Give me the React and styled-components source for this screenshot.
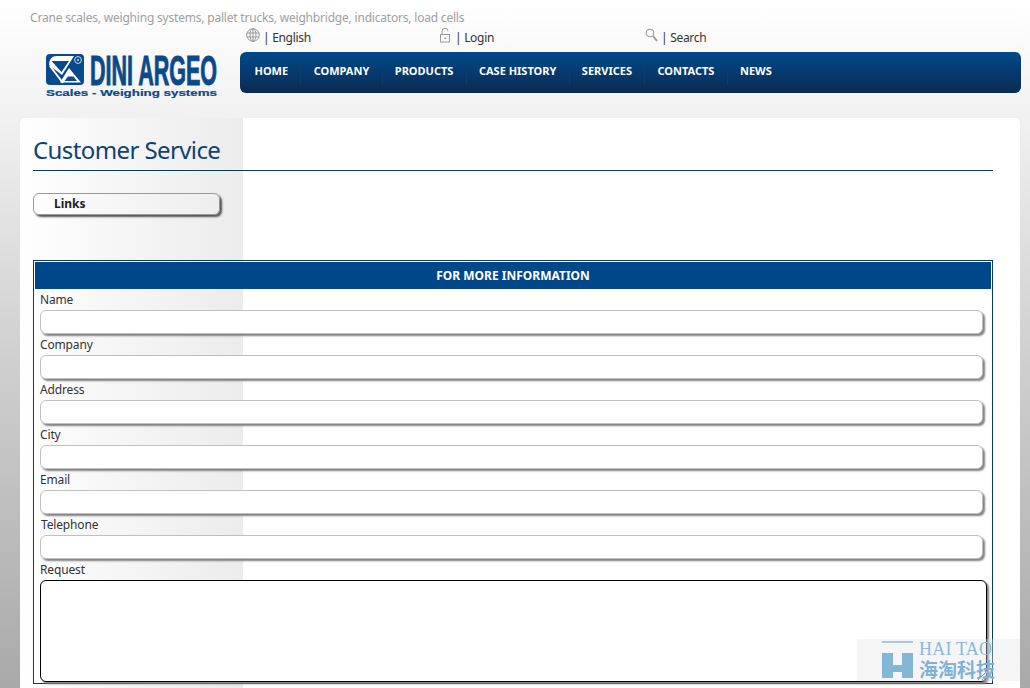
import React from "react";
import styled, { createGlobalStyle } from "styled-components";

const Global = createGlobalStyle`
  html, body { margin: 0; padding: 0; height: 688px; overflow: hidden; }
  body {
    background: linear-gradient(180deg, #ffffff 0, #f1f1f1 118px, #d4d4d4 320px, #a9a9a9 688px);
    font-family: "Noto Sans", "DejaVu Sans", sans-serif;
    color: #333;
  }
  * { box-sizing: border-box; }
`;

const Page = styled.div`
  position: relative;
  width: 1030px;
  height: 688px;
  overflow: hidden;
`;

const Tagline = styled.div`
  height: 27px;
  padding: 8px 0 0 30px;
  font-size: 12px;
  line-height: 20px;
  letter-spacing: -0.2px;
  color: #a0a0a0;
`;

const HeaderBody = styled.header`
  display: flex;
  height: 91px;
`;

const LogoSlot = styled.div`
  width: 240px;
  padding: 26px 0 0 45px;
`;

const HeaderRight = styled.div`
  width: 781px;
`;

const UtilRow = styled.div`
  display: flex;
  height: 25px;
  padding-left: 6px;
`;

const UtilItem = styled.a`
  display: flex;
  align-items: flex-start;
  width: ${(p) => p.$w}px;
  font-size: 12px;
  line-height: 22px;
  letter-spacing: -0.3px;
  color: #333;
  svg { margin-top: 1px; margin-right: 3px; flex: none; }
`;

const Nav = styled.nav`
  display: flex;
  align-items: center;
  height: 41px;
  border-radius: 6px;
  padding-left: 2.25px;
  background: linear-gradient(180deg, #00498c 0, #0b2b50 100%);
`;

const NavItem = styled.a`
  padding: 0 12.25px;
  height: 24px;
  line-height: 20px;
  font-size: 11px;
  font-weight: 700;
  color: #fff;
  white-space: nowrap;
  border-right: 1px solid ${(p) => (p.$last ? "transparent" : "#0d3d70")};
`;

const Card = styled.main`
  width: 1000px;
  height: 600px;
  margin-left: 20px;
  border-radius: 5px 5px 0 0;
  padding: 0 27px 0 13px;
  background:
    linear-gradient(90deg, #ffffff 0, #f8f8f8 70px, #ececec 223px, transparent 223px) no-repeat,
    #fff;
`;

const Title = styled.h1`
  margin: 0;
  height: 53px;
  padding-top: 14px;
  font-size: 24px;
  line-height: 36px;
  letter-spacing: -0.6px;
  font-weight: 400;
  color: #0f4273;
  border-bottom: 1px solid #0d3a5f;
`;

const LinkButton = styled.a`
  display: block;
  width: 187px;
  height: 22px;
  margin-top: 22px;
  padding-left: 20px;
  font-size: 12px;
  line-height: 19px;
  font-weight: 700;
  color: #222;
  background: transparent;
  border: 1px solid #999;
  border-radius: 6px;
  box-shadow: 2px 2px 2px #555;
`;

const FormBox = styled.form`
  width: 960px;
  margin-top: 45px;
  padding: 1px;
  border: 1px solid #0c3c5c;
`;

const FormHead = styled.div`
  height: 27px;
  margin-bottom: 1px;
  text-align: center;
  font-size: 12px;
  line-height: 27px;
  font-weight: 700;
  color: #fff;
  background: #00478a;
`;

const Label = styled.label`
  display: block;
  height: 20px;
  padding-left: ${(p) => p.$indent || 5}px;
  font-size: 12px;
  line-height: 20px;
  letter-spacing: -0.15px;
  color: #333;
`;

const Field = styled.input`
  display: block;
  width: 943px;
  height: 24px;
  margin: 0 0 1px 5px;
  border: 1px solid #c0c0c0;
  border-radius: 6px;
  background: #fff;
  box-shadow: 2px 2px 2px #808080;
  outline: none;
`;

const Area = styled.textarea`
  display: block;
  width: 947px;
  height: 102px;
  margin-left: 5px;
  border: 1px solid #000;
  border-radius: 6px;
  background: #fff;
  box-shadow: 2px 2px 2px #808080;
  outline: none;
`;

const Watermark = styled.aside`
  position: absolute;
  left: 857px;
  top: 639px;
  width: 163px;
  height: 42px;
  display: flex;
  gap: 6px;
  padding: 2px 0 0 25px;
  background: rgba(225, 225, 225, 0.35);
`;

const WmText = styled.div`
  display: flex;
  flex-direction: column;
  color: #7fb2d6;
`;

const WmLatin = styled.span`
  font-family: "Liberation Serif", serif;
  font-size: 18px;
  line-height: 17px;
  letter-spacing: 0.2px;
  white-space: nowrap;
  color: #8db9d8;
`;

const WmCjk = styled.span`
  font-family: "Noto Sans CJK SC", sans-serif;
  font-size: 19px;
  line-height: 22px;
  font-weight: 700;
  white-space: nowrap;
`;

const Logo = () => (
  <svg width="174" height="46" viewBox="0 0 174 46" style={{ display: "block" }}>
    <rect x="1" y="1" width="38" height="31" rx="4" fill="#0a4a8a" />
    <path d="M4 12 Q4 3 12 3 H29 L17 22 Z" fill="#fff" />
    <path d="M6.5 8 H24 L16.5 19 Z" fill="#0a4a8a" />
    <path d="M5 13 L18 30" stroke="#fff" strokeWidth="2" fill="none" />
    <path d="M24 15 L36 29.5 H15 Z" fill="#fff" />
    <path d="M19.5 28 L23 23.5 H28.5 L32 28 Z" fill="#0a4a8a" />
    <circle cx="33" cy="7" r="3.4" fill="#0a4a8a" stroke="#cfd9e4" strokeWidth="1" />
    <circle cx="33" cy="7" r="1" fill="#cfd9e4" />
    <text transform="translate(45 32) scale(1 2.15)" fontFamily="Liberation Sans" fontWeight="700" fontSize="20" fill="#0a4a8a" stroke="#0a4a8a" strokeWidth="0.5" textLength="127" lengthAdjust="spacingAndGlyphs">DINI ARGEO</text>
    <text transform="translate(1 43) scale(1 0.72)" fontFamily="Liberation Sans" fontWeight="700" fontSize="13" fill="#0a4a8a" stroke="#0a4a8a" strokeWidth="0.3" textLength="171" lengthAdjust="spacingAndGlyphs">Scales - Weighing systems</text>
  </svg>
);

const Globe = () => (
  <svg width="14" height="14" viewBox="0 0 14 14" fill="none" stroke="#999" strokeWidth="1">
    <circle cx="7" cy="7" r="6.3" />
    <ellipse cx="7" cy="7" rx="3" ry="6.3" />
    <path d="M7 .7V13.3M.8 5H13.2M.8 9H13.2" />
  </svg>
);

const Lock = () => (
  <svg width="13" height="15" viewBox="0 0 13 15" fill="none" stroke="#999" strokeWidth="1">
    <path d="M3 6.5V3.5a3 3 0 0 1 6-.4" />
    <rect x="1.5" y="6.5" width="9" height="7.5" />
    <rect x="5.5" y="9.5" width="1.4" height="1.6" fill="#888" stroke="none" />
  </svg>
);

const Search = () => (
  <svg width="13" height="15" viewBox="0 0 13 15" fill="none" stroke="#999">
    <circle cx="5" cy="5" r="3.8" strokeWidth="1.1" />
    <path d="M8 8L12 13" strokeWidth="2" />
  </svg>
);

const HMark = () => (
  <svg width="31" height="40" viewBox="0 0 31 40" style={{ flex: "none" }}>
    <rect x="0" y="0" width="31" height="2" fill="#a8cbe2" />
    <path d="M0 12H11V24H20V12H31V37H20V31H11V37H0Z" fill="#86b6d6" />
  </svg>
);

const navItems = ["HOME", "COMPANY", "PRODUCTS", "CASE HISTORY", "SERVICES", "CONTACTS", "NEWS"];
const fields = [["Name"], ["Company"], ["Address"], ["City"], ["Email"], ["Telephone", 6]];

export default function App() {
  return (
    <Page>
      <Global />
      <Tagline>Crane scales, weighing systems, pallet trucks, weighbridge, indicators, load cells</Tagline>
      <HeaderBody>
        <LogoSlot><Logo /></LogoSlot>
        <HeaderRight>
          <UtilRow>
            <UtilItem $w={193}><Globe />| English</UtilItem>
            <UtilItem $w={206}><Lock />| Login</UtilItem>
            <UtilItem $w={200}><Search />| Search</UtilItem>
          </UtilRow>
          <Nav>
            {navItems.map((n, i) => (
              <NavItem key={n} $last={i === navItems.length - 1}>{n}</NavItem>
            ))}
          </Nav>
        </HeaderRight>
      </HeaderBody>
      <Card>
        <Title>Customer Service</Title>
        <LinkButton>Links</LinkButton>
        <FormBox>
          <FormHead>FOR MORE INFORMATION</FormHead>
          {fields.map(([f, indent]) => (
            <React.Fragment key={f}>
              <Label $indent={indent}>{f}</Label>
              <Field type="text" />
            </React.Fragment>
          ))}
          <Label>Request</Label>
          <Area />
        </FormBox>
      </Card>
      <Watermark>
        <HMark />
        <WmText>
          <WmLatin>HAI TAO</WmLatin>
          <WmCjk>海淘科技</WmCjk>
        </WmText>
      </Watermark>
    </Page>
  );
}
